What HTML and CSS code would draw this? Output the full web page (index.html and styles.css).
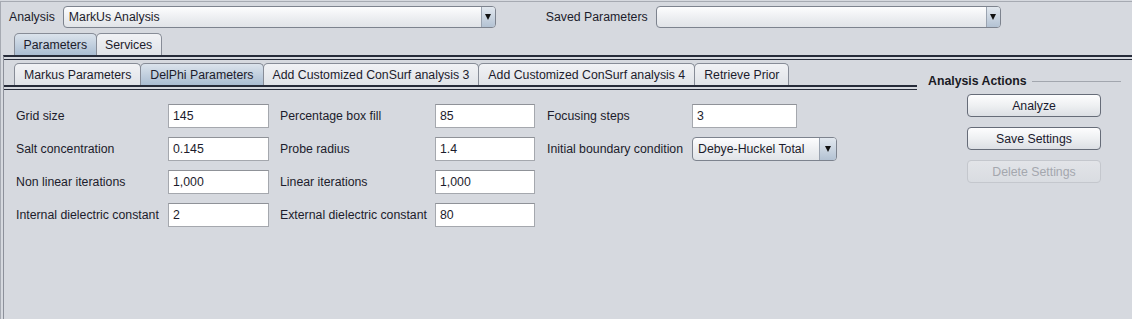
FILE: index.html
```html
<!DOCTYPE html>
<html lang="en">
<head>
  <meta charset="UTF-8" />
  <title>MarkUs – Analysis Parameters</title>
  <link rel="stylesheet" href="styles.css">
</head>
<body>
  <div class="frame">

    <!-- analysis selection -->
    <div class="toprow">
      <span class="lbl">Analysis</span>
      <div class="combo combo-analysis"><span class="combo-text">MarkUs Analysis</span><span class="arrow"></span></div>
      <span class="lbl lbl-saved">Saved Parameters</span>
      <div class="combo combo-saved"><span class="combo-text"></span><span class="arrow"></span></div>
    </div>

    <div class="tabs outer-tabs">
      <div class="tab selected">Parameters</div>
      <div class="tab">Services</div>
    </div>

    <div class="outer-body">
      <div class="rule"></div>
      <div class="split">

        <div class="inner">
          <div class="tabs inner-tabs">
            <div class="tab">Markus Parameters</div>
            <div class="tab selected">DelPhi Parameters</div>
            <div class="tab">Add Customized ConSurf analysis 3</div>
            <div class="tab">Add Customized ConSurf analysis 4</div>
            <div class="tab">Retrieve Prior</div>
          </div>
          <div class="inner-rule"></div>

          <!-- DelPhi form -->
          <div class="params">
            <span class="plabel">Grid size</span>
            <div class="cell"><div class="field w101">145</div></div>
            <span class="plabel">Percentage box fill</span>
            <div class="cell"><div class="field w100">85</div></div>
            <span class="plabel">Focusing steps</span>
            <div class="cell"><div class="field w105">3</div></div>

            <span class="plabel">Salt concentration</span>
            <div class="cell"><div class="field w101">0.145</div></div>
            <span class="plabel">Probe radius</span>
            <div class="cell"><div class="field w100">1.4</div></div>
            <span class="plabel">Initial boundary condition</span>
            <div class="cell"><div class="combo combo-small"><span class="combo-text">Debye-Huckel Total</span><span class="arrow"></span></div></div>

            <span class="plabel">Non linear iterations</span>
            <div class="cell"><div class="field w101">1,000</div></div>
            <span class="plabel">Linear iterations</span>
            <div class="cell"><div class="field w100">1,000</div></div>
            <span></span><span></span>

            <span class="plabel">Internal dielectric constant</span>
            <div class="cell"><div class="field w101">2</div></div>
            <span class="plabel">External dielectric constant</span>
            <div class="cell"><div class="field w100">80</div></div>
            <span></span><span></span>
          </div>
        </div>

        <aside class="actions">
          <div class="actions-title">Analysis Actions</div>
          <div class="btns">
            <button type="button" class="btn">Analyze</button>
            <button type="button" class="btn">Save Settings</button>
            <button type="button" class="btn" disabled>Delete Settings</button>
          </div>
        </aside>

      </div>
    </div>
  </div>
</body>
</html>
```

FILE: styles.css
```css
body{margin:0;background:#d6d9df;font:12.3px "Liberation Sans",Arial,Helvetica,sans-serif;color:#1c1c2c;overflow:hidden}
.frame{height:318px;margin-top:1px;border-top:1px solid #a6aab2;border-left:1px solid #a6aab2;box-sizing:border-box}

/* top row */
.toprow{display:flex;align-items:center;height:22px;padding:4px 0 0 8px}
.lbl{margin-right:8px;white-space:nowrap}
.lbl-saved{margin-left:50px}
.combo{box-sizing:border-box;height:22px;display:flex;align-items:center;border:1px solid #7d838e;border-radius:4px;background:linear-gradient(#fdfdfe,#eceef1 55%,#e1e4e8);overflow:hidden}
.combo-text{flex:1;padding-left:5px;white-space:nowrap}
.combo .arrow{width:13px;height:100%;border-left:1px solid #9aa3b0;background:linear-gradient(#e2e8ef,#b3c2d3);display:flex;align-items:center;justify-content:center}
.combo .arrow::after{content:"";border-left:3px solid transparent;border-right:3px solid transparent;border-top:6px solid #111}
.combo-analysis{width:433px}
.combo-saved{width:345px}
.combo-small{width:145px;height:24px}
.combo-small .arrow{width:16px}

/* tabs */
.tabs{display:flex;height:22px}
.outer-tabs{margin:5px 0 0 13px}
.tab{box-sizing:border-box;height:22px;display:flex;align-items:center;padding:0 8.5px;border:1px solid #878c97;border-bottom:none;border-radius:5px 5px 0 0;background:linear-gradient(#f1f2f5,#e0e3e8);white-space:nowrap;margin-right:-1px}
.tab.selected{background:linear-gradient(#dbe3ec,#aabdd2)}
.inner-tabs .tab{padding:0 9px}

.outer-body{margin-left:2px;border-top:2px solid #262b39;border-left:1px solid #8c909a;height:262px}
.rule{margin-top:2px;border-top:1px solid #262b39}
.split{display:flex;margin-top:3px}

.inner{width:913px}
.inner-tabs{margin-left:10px}
.inner-rule{height:2px;border-top:2px solid #262b39;border-bottom:1px solid #262b39}

/* DelPhi form */
.params{display:grid;grid-template-columns:152px 112px 155px 112px 145px auto;grid-auto-rows:24px;row-gap:9px;align-items:center;padding:14px 0 0 12px}
.plabel{white-space:nowrap}
.cell{display:flex;align-items:center}
.field{box-sizing:border-box;height:24px;display:flex;align-items:center;padding-left:4px;background:#fff;border:1px solid #a5a8ae;border-top-color:#8f9298}
.w101{width:101px}
.w100{width:100px}
.w105{width:105px}

/* actions */
.actions{flex:1;padding:0 11px}
.actions-title{display:flex;align-items:center;gap:5px;margin-top:11px;height:14px;font-weight:bold;color:#1a1a24;white-space:nowrap}
.actions-title::after{content:"";flex:1;border-top:1px solid #a2a6ae}
.btns{display:flex;flex-direction:column;gap:10px;margin:6px 0 0 39px}
.btn{box-sizing:border-box;width:134px;height:23px;padding:0;font:12.3px "Liberation Sans",Arial,sans-serif;color:#1a1a2e;border:1px solid #666c78;border-radius:4px;background:linear-gradient(#fdfdfe,#eef0f2 50%,#dcdfe4)}
.btn:disabled{color:#a4a7ae;border-color:#c4c7cd;background:linear-gradient(#e2e4e8,#d9dce1)}
```
